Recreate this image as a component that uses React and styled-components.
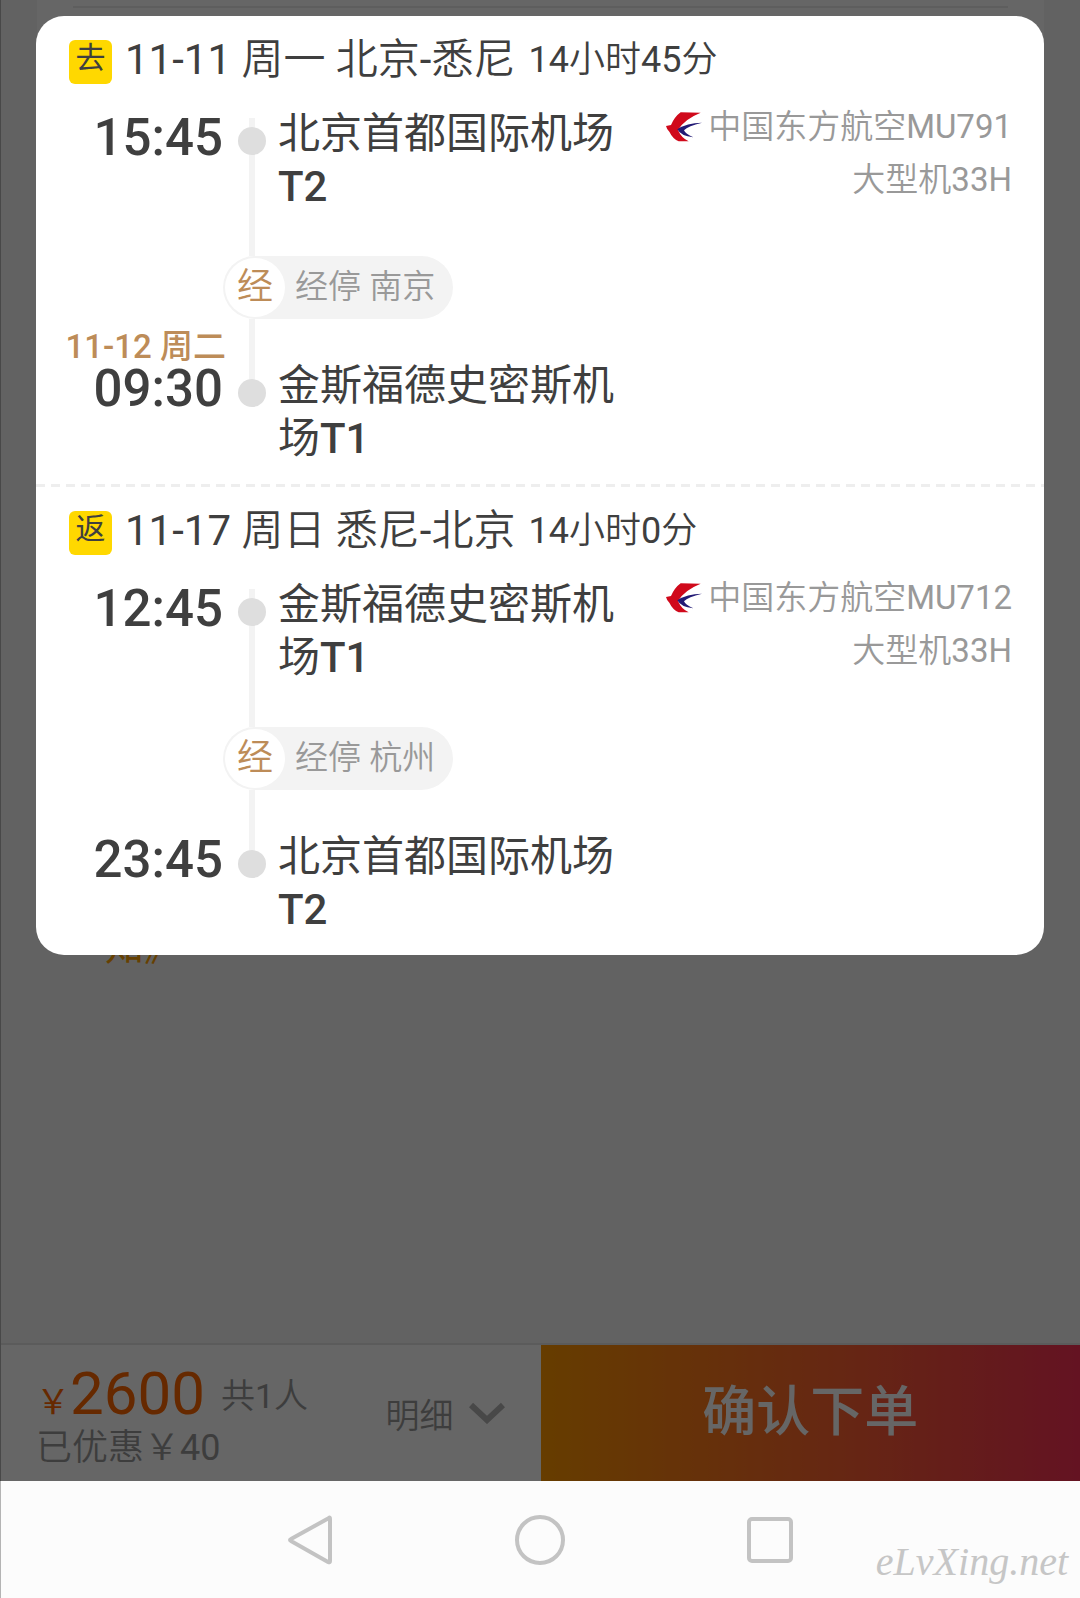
import React from 'react';
import styled, { createGlobalStyle } from 'styled-components';

const lightStack = 'Roboto, "Noto Sans CJK SC DemiLight", "Noto Sans CJK SC", sans-serif';

const GlobalStyle = createGlobalStyle`
  * {
    box-sizing: border-box;
  }
  body {
    margin: 0;
    font-family: Roboto, "Noto Sans CJK SC", sans-serif;
    color: #3f3f3f;
  }
  button {
    font-family: inherit;
    border: none;
    padding: 0;
    background: none;
    cursor: pointer;
  }
  h2, p {
    margin: 0;
  }
`;

const Screen = styled.div`
  min-height: 100vh;
  display: flex;
  flex-direction: column;
`;

const Page = styled.div`
  position: relative;
  flex: 1;
  display: flex;
  flex-direction: column;
  background-color: #f5f5f5;
  border-left: 1px solid #b4b4b4;
`;

const OrderContent = styled.main`
  flex: 1;
  padding: 0 36px;
`;

const OrderPanel = styled.section`
  height: 924px;
  background-color: #fff;
  padding: 6px 36px 0;
`;

const PanelLine = styled.div`
  height: 2px;
  background-color: #ececec;
`;

const NoticeLink = styled.a`
  display: block;
  padding-left: 68px;
  font-size: 39px;
  line-height: 46px;
  color: #ffa000;
  text-decoration: none;
`;

const OrderBar = styled.footer`
  display: flex;
  height: 138px;
  background-color: #fff;
  border-top: 2px solid #e4e4e4;
`;

const PriceSide = styled.div`
  flex: 0 0 50%;
  display: flex;
  align-items: center;
  justify-content: space-between;
  padding: 0 36px 0 35px;
`;

const PriceBlock = styled.div`
  padding-top: 14px;
`;

const PriceLine = styled.div`
  display: flex;
  align-items: center;
  gap: 16px;
  height: 56px;
`;

const Price = styled.span`
  font-size: 60px;
  line-height: 56px;
  color: #ff6600;
`;

const Currency = styled.span`
  font-size: 34px;
`;

const Muted = styled.p`
  padding-bottom: ${(props) => (props.$small ? '4px' : '0')};
  font-family: ${lightStack};
  font-size: ${(props) => (props.$small ? '34px' : '36px')};
  line-height: 44px;
  color: #999;
`;

const DetailButton = styled.button`
  display: flex;
  align-items: center;
  gap: 15px;
  font-family: ${lightStack};
  font-size: 34px;
  color: #999;
`;

const ConfirmButton = styled.button`
  flex: 1;
  font-size: 54px;
  font-weight: 500;
  line-height: 64px;
  color: #fff;
  background: linear-gradient(90deg, #ff9800, #ff6230 55%, #f93056);
`;

const Overlay = styled.div`
  position: absolute;
  inset: 0 0 0 -1px;
  padding: 16px 36px;
  background-color: rgba(0, 0, 0, 0.6);
`;

const Dialog = styled.section`
  background-color: #fff;
  border-radius: 28px;
  overflow: hidden;
`;

const Leg = styled.article`
  padding: 14px 32px 19px;
`;

const Divider = styled.div`
  height: 3px;
  background: repeating-linear-gradient(90deg, #eee 0 9px, transparent 9px 15px);
`;

const LegHeader = styled.header`
  display: flex;
  align-items: center;
  height: 60px;
  margin-bottom: 10px;
`;

const Badge = styled.span`
  align-self: flex-start;
  width: 43px;
  height: 44px;
  margin: 10px 13px 0 1px;
  border-radius: 6px;
  background-color: #ffd800;
  font-size: 30px;
  line-height: 36px;
  text-align: center;
`;

const Route = styled.h2`
  font-family: ${lightStack};
  font-size: 42px;
  font-weight: 400;
  line-height: 60px;
`;

const Duration = styled.span`
  margin-left: 13px;
  font-family: ${lightStack};
  font-size: 36px;
  line-height: 60px;
`;

const StopRow = styled.div`
  display: grid;
  grid-template-columns: 158px 52px 350px 1fr;
  min-height: ${(props) => (props.$arrival ? '145px' : '156px')};
`;

const TimeCell = styled.div`
  display: flex;
  flex-direction: column;
  align-items: flex-end;
  padding-top: 12px;
`;

const NextDay = styled.span`
  height: 32px;
  font-size: 33px;
  font-weight: 500;
  line-height: 32px;
  white-space: nowrap;
  color: #bd8c58;
`;

const Time = styled.time`
  margin-right: 3px;
  font-size: 51px;
  font-weight: 500;
  line-height: 52px;
`;

const Rail = styled.div`
  display: flex;
  flex-direction: column;
  align-items: center;
  padding-top: ${(props) => (props.$arrival ? '0' : '18px')};
`;

const RailLine = styled.div`
  width: 6px;
  height: ${(props) => props.$height || 'auto'};
  flex: ${(props) => (props.$height ? 'none' : '1')};
  background-color: #f3f3f3;
`;

const Dot = styled.div`
  width: 28px;
  height: 28px;
  border-radius: 50%;
  background-color: #dedede;
`;

const Airport = styled.p`
  padding-top: ${(props) => (props.$arrival ? '40px' : '7px')};
  font-size: 42px;
  font-weight: 400;
  line-height: 53px;
`;

const Terminal = styled.span`
  font-weight: 500;
`;

const Flight = styled.div`
  font-family: ${lightStack};
  font-size: 33px;
  line-height: 53px;
  text-align: right;
  white-space: nowrap;
  color: #999;
`;

const Carrier = styled.div`
  display: flex;
  align-items: center;
  justify-content: flex-end;
  gap: 6px;
`;

const ViaRow = styled.div`
  padding-left: 155px;
`;

const ViaPill = styled.div`
  display: inline-flex;
  align-items: center;
  gap: 10px;
  height: 63px;
  padding: 0 18px 0 2px;
  border-radius: 32px;
  background-color: #f3f3f3;
  font-family: ${lightStack};
  font-size: 33px;
  color: #999;
  vertical-align: top;
`;

const ViaMark = styled.span`
  width: 60px;
  height: 59px;
  border-radius: 50%;
  background-color: #fff;
  font-size: 36px;
  line-height: 58px;
  text-align: center;
  color: #bd8c58;
`;

const ViaText = styled.span`
  height: 60px;
  line-height: 58px;
`;

const SystemNav = styled.nav`
  position: relative;
  display: flex;
  justify-content: center;
  height: 117px;
  padding-right: 2px;
  border-left: 1px solid #b4b4b4;
  background-color: #fcfcfc;
`;

const NavButton = styled.button`
  display: flex;
  align-items: center;
  justify-content: center;
  width: 230px;
`;

const Watermark = styled.span`
  position: absolute;
  right: 12px;
  bottom: 12px;
  font-family: "Liberation Serif", serif;
  font-size: 40px;
  font-style: italic;
  line-height: 48px;
  color: #c6c6c6;
`;

const AirlineLogo = () => (
  <svg width="36" height="30" viewBox="0 0 108 90" aria-hidden="true">
    <path
      d="M104 2 L44 1 Q26 14 15 39 L0 42 Q3 54 10 59 Q20 80 38 88 L68 88 Q46 78 36 54 Q54 22 104 2Z"
      fill="#d0091b"
    />
    <path
      d="M108 32 Q62 32 34 52 Q44 72 82 76 Q58 66 54 55 Q66 42 108 32Z"
      fill="#221a75"
    />
  </svg>
);

const legs = [
  {
    badge: '去',
    route: '11-11 周一 北京-悉尼',
    duration: '14小时45分',
    from: { time: '15:45', airport: '北京首都国际机场', terminal: 'T2' },
    via: '南京',
    to: { time: '09:30', day: '11-12 周二', airport: '金斯福德史密斯机场', terminal: 'T1' },
    flight: '中国东方航空MU791',
    plane: '大型机33H',
  },
  {
    badge: '返',
    route: '11-17 周日 悉尼-北京',
    duration: '14小时0分',
    from: { time: '12:45', airport: '金斯福德史密斯机场', terminal: 'T1' },
    via: '杭州',
    to: { time: '23:45', airport: '北京首都国际机场', terminal: 'T2' },
    flight: '中国东方航空MU712',
    plane: '大型机33H',
  },
];

const FlightLeg = ({ leg }) => (
  <Leg>
    <LegHeader>
      <Badge>{leg.badge}</Badge>
      <Route>{leg.route}</Route>
      <Duration>{leg.duration}</Duration>
    </LegHeader>

    <StopRow>
      <TimeCell>
        <Time>{leg.from.time}</Time>
      </TimeCell>
      <Rail>
        <RailLine $height="9px" />
        <Dot />
        <RailLine />
      </Rail>
      <Airport>
        {leg.from.airport}
        <Terminal>{leg.from.terminal}</Terminal>
      </Airport>
      <Flight>
        <Carrier>
          <AirlineLogo />
          {leg.flight}
        </Carrier>
        <div>{leg.plane}</div>
      </Flight>
    </StopRow>

    <ViaRow>
      <ViaPill>
        <ViaMark>经</ViaMark>
        <ViaText>经停 {leg.via}</ViaText>
      </ViaPill>
    </ViaRow>

    <StopRow $arrival>
      <TimeCell>
        <NextDay>{leg.to.day}</NextDay>
        <Time>{leg.to.time}</Time>
      </TimeCell>
      <Rail $arrival>
        <RailLine $height="60px" />
        <Dot />
      </Rail>
      <Airport $arrival>
        {leg.to.airport}
        <Terminal>{leg.to.terminal}</Terminal>
      </Airport>
    </StopRow>
  </Leg>
);

const App = () => {
  return (
    <>
      <GlobalStyle />
      <Screen>
        <Page>
          <OrderContent>
            <OrderPanel>
              <PanelLine />
            </OrderPanel>
            <NoticeLink href="#notice">知》</NoticeLink>
          </OrderContent>

          <OrderBar>
            <PriceSide>
              <PriceBlock>
                <PriceLine>
                  <Price>
                    <Currency>￥</Currency>2600
                  </Price>
                  <Muted $small>共1人</Muted>
                </PriceLine>
                <Muted>已优惠￥40</Muted>
              </PriceBlock>
              <DetailButton type="button">
                明细
                <svg width="36" height="22" viewBox="0 0 36 22" fill="none" stroke="#b4b4b4" strokeWidth="6">
                  <path d="M2 3 L18 18 L34 3" />
                </svg>
              </DetailButton>
            </PriceSide>
            <ConfirmButton type="button">确认下单</ConfirmButton>
          </OrderBar>

          <Overlay>
            <Dialog role="dialog" aria-label="航班信息">
              <FlightLeg leg={legs[0]} />
              <Divider />
              <FlightLeg leg={legs[1]} />
            </Dialog>
          </Overlay>
        </Page>

        <SystemNav>
          <NavButton type="button" aria-label="返回">
            <svg width="46" height="52" viewBox="0 0 46 52" fill="none" stroke="#c3c3c3" strokeWidth="4" strokeLinejoin="round">
              <path d="M42 4 Q43 3 43 5 V47 Q43 49 41 48 L4 27 Q2 26 4 25Z" />
            </svg>
          </NavButton>
          <NavButton type="button" aria-label="主页">
            <svg width="52" height="52" viewBox="0 0 52 52" fill="none" stroke="#c3c3c3" strokeWidth="4">
              <circle cx="26" cy="26" r="23" />
            </svg>
          </NavButton>
          <NavButton type="button" aria-label="最近任务">
            <svg width="46" height="46" viewBox="0 0 46 46" fill="none" stroke="#c3c3c3" strokeWidth="4">
              <rect x="2" y="2" width="42" height="42" rx="3" />
            </svg>
          </NavButton>
          <Watermark>eLvXing.net</Watermark>
        </SystemNav>
      </Screen>
    </>
  );
};

export default App;
